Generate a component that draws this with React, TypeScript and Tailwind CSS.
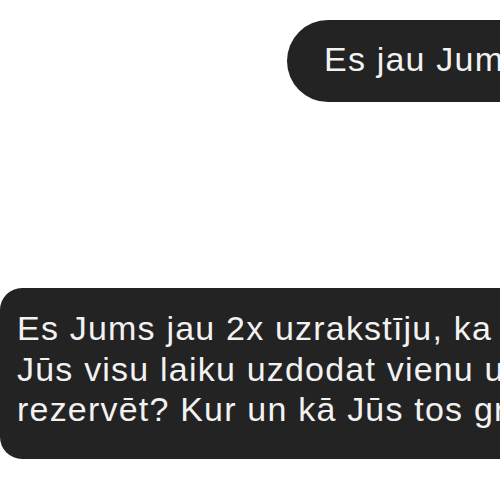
export default function App() {
  return (
    <div
      className="w-[500px] h-[500px] overflow-hidden bg-white"
      style={{ fontFamily: '"Liberation Sans", Arial, sans-serif' }}
    >
      <div className="flex flex-col items-start pt-[20px]">
        <div className="ml-[287px] w-[260px] shrink-0 h-[82px] rounded-l-full bg-[#232323] pl-[37px] pt-[19px] text-[34px] leading-[40.5px] tracking-[1.2px] text-[#f2f2f2] whitespace-nowrap">
          Es jau Jums
        </div>

        <div className="mt-[186px] w-[560px] shrink-0 rounded-[22px] bg-[#232323] pl-[17px] pt-[20px] pb-[29px] text-[34px] leading-[40.5px] tracking-[1.2px] text-[#f2f2f2] whitespace-nowrap">
          <div>Es Jums jau 2x uzrakstīju, ka</div>
          <div>Jūs visu laiku uzdodat vienu un</div>
          <div>rezervēt? Kur un kā Jūs tos gr</div>
        </div>
      </div>
    </div>
  );
}
